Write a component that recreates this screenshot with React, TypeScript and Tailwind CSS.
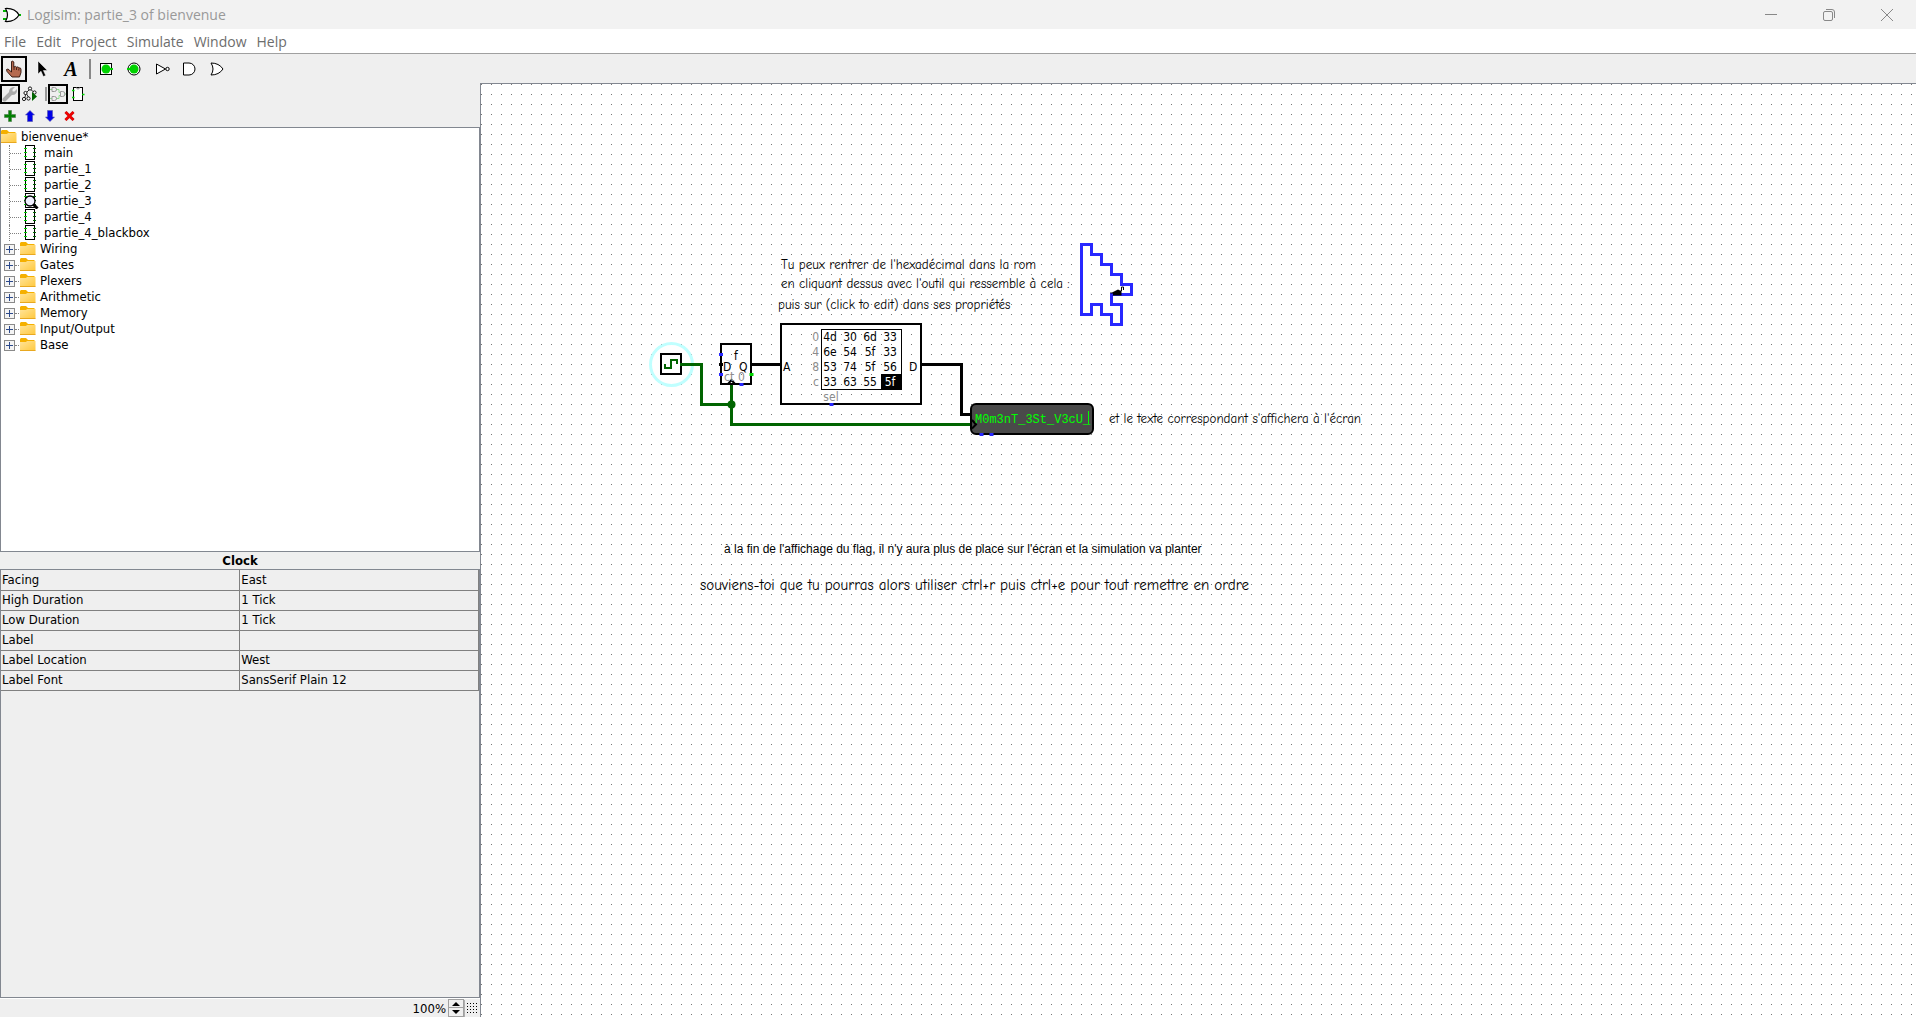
import React from "react";

const UI = "font-['DejaVu_Sans_Condensed','DejaVu_Sans',sans-serif]";

const menus = ["File", "Edit", "Project", "Simulate", "Window", "Help"];
const circuits = ["main", "partie_1", "partie_2", "partie_3", "partie_4", "partie_4_blackbox"];
const libraries = ["Wiring", "Gates", "Plexers", "Arithmetic", "Memory", "Input/Output", "Base"];
const attributes: [string, string][] = [
  ["Facing", "East"],
  ["High Duration", "1 Tick"],
  ["Low Duration", "1 Tick"],
  ["Label", ""],
  ["Label Location", "West"],
  ["Label Font", "SansSerif Plain 12"],
];
const rom: [string, string[]][] = [
  ["0", ["4d", "30", "6d", "33"]],
  ["4", ["6e", "54", "5f", "33"]],
  ["8", ["53", "74", "5f", "56"]],
  ["c", ["33", "63", "55", "5f"]],
];

function Folder() {
  return (
    <svg width="16" height="16" viewBox="0 0 16 16" className="shrink-0">
      <defs>
        <linearGradient id="folder" x1="0" y1="0" x2="1" y2="1">
          <stop offset="0" stopColor="#ffe49a" />
          <stop offset="1" stopColor="#ffc83c" />
        </linearGradient>
      </defs>
      <path d="M0 3V2l1-1h5l2 2h6l1 1v3H0z" fill="#f5b000" />
      <path d="M0 5h6l1-1h8.5v9l-.5 1H0z" fill="url(#folder)" />
      <path d="M0 13.5h15.5" stroke="#e8a820" />
    </svg>
  );
}

function CircuitIcon({ viewed }: { viewed?: boolean }) {
  return (
    <svg width="16" height="16" viewBox="0 0 16 16" className="shrink-0" shapeRendering="crispEdges">
      <rect x="2.5" y="0.5" width="9" height="14" fill="#fff" stroke="#000" />
      <path d="M1 3.5h3M1 7.5h3M1 11.5h3" stroke="#00d200" />
      <path d="M10 3.5h3M10 7.5h3M10 11.5h3" stroke="#006400" />
      {viewed && (
        <g shapeRendering="auto">
          <path d="M10.5 11.5L14.5 15.5" stroke="#000" strokeWidth="3" />
          <circle cx="7" cy="8" r="5" fill="#f0f0ff" stroke="#000" strokeWidth="1.3" />
        </g>
      )}
    </svg>
  );
}

function Expander() {
  return (
    <svg width="11" height="11" viewBox="0 0 11 11" shapeRendering="crispEdges" className="block">
      <rect x="0.5" y="0.5" width="10" height="10" fill="#f4f4f4" stroke="#8a8a8a" />
      <path d="M2 5.5h7M5.5 2v7" stroke="#2c4a8c" />
    </svg>
  );
}

function Tool({ label, active, size = "lg", children }: { label: string; active?: boolean; size?: "lg" | "sm"; children: React.ReactNode }) {
  const box = size === "lg" ? "h-[26px] w-[26px] mx-px" : "h-5 w-5";
  return (
    <button aria-label={label} className={`${box} flex items-center justify-center border-2 ${active ? "border-black" : "border-transparent"}`}>
      {children}
    </button>
  );
}

function MainToolbar() {
  return (
    <div className="flex h-[29px] shrink-0 items-center">
      <Tool label="Poke tool" active>
        <svg width="18" height="18" viewBox="0 0 18 18">
          <path d="M6.5 1.5q1.500-1 2.300.5v5l1.700-.6 1 .8 1.600-.3.9 1 1.500.2.5 1.400v3l-1.500 4.500h-7.500L2 11.500 1.500 9.500l1.500-.5 3.500 3z" fill="#b56a50" stroke="#2b1009" strokeWidth="0.9" />
          <path d="M9 7v3M11.500 7.500v2.500M13.800 8.500v2" stroke="#2b1009" strokeWidth="0.8" />
        </svg>
      </Tool>
      <Tool label="Edit tool">
        <svg width="16" height="18" viewBox="0 0 16 18">
          <path d="M4 1v13l3-2.800L9.300 16.500l2.400-1L9.400 10.500h4z" fill="#000" stroke="#fff" strokeWidth="0.5" />
        </svg>
      </Tool>
      <Tool label="Text tool">
        <span className="pl-0.5 font-['Liberation_Serif',serif] text-xl font-bold italic leading-5">A</span>
      </Tool>
      <div className="ml-[5px] mr-px h-5 w-0.5 bg-[#888]" />
      <Tool label="Input pin">
        <svg width="16" height="16" viewBox="0 0 16 16">
          <rect x="2.500" y="2.500" width="11" height="11" fill="#fff" stroke="#000" />
          <circle cx="8" cy="8" r="4.500" fill="#00d200" />
          <path d="M12 8h3" stroke="#00d200" strokeWidth="2" />
        </svg>
      </Tool>
      <Tool label="Output pin">
        <svg width="16" height="16" viewBox="0 0 16 16">
          <circle cx="8" cy="8" r="6" fill="#fff" stroke="#000" />
          <circle cx="8" cy="8" r="4.500" fill="#00d200" />
          <path d="M1 8h3" stroke="#00d200" strokeWidth="2" />
        </svg>
      </Tool>
      <Tool label="NOT gate">
        <svg width="16" height="16" viewBox="0 0 16 16" fill="#fff" stroke="#000">
          <path d="M2.500 3v10L11.500 8z" />
          <circle cx="13.500" cy="8" r="1.700" />
        </svg>
      </Tool>
      <Tool label="AND gate">
        <svg width="16" height="16" viewBox="0 0 16 16" fill="#fff" stroke="#000">
          <path d="M1.500 2H7a6 6 0 0 1 0 12H1.500z" />
        </svg>
      </Tool>
      <Tool label="OR gate">
        <svg width="16" height="16" viewBox="0 0 16 16" fill="#fff" stroke="#000">
          <path d="M1 2q8 0 12 6Q9 14 1 14q4-6 0-12z" />
        </svg>
      </Tool>
    </div>
  );
}

function ExplorerToolbars() {
  return (
    <div className="shrink-0 pt-px">
      <div className="flex h-5 items-center">
        <Tool label="Show toolbox" size="sm" active>
          <svg width="16" height="16" viewBox="0 0 16 16">
            <path d="M2.500 13.500L9 7" stroke="#aaa" strokeWidth="4" strokeLinecap="round" />
            <path d="M7 6q0-5 6-5l-2.500 2.500v2h2L15 3q.5 6-5 6z" fill="#aaa" />
          </svg>
        </Tool>
        <Tool label="Show simulation tree" size="sm">
          <svg width="16" height="16" viewBox="0 0 16 16" className="shrink-0">
            <path d="M8 3L4 7l-1.500 6M8 3l5 4M4 7l3 5" stroke="#000" fill="none" strokeWidth="0.800" />
            <g fill="#fff" stroke="#000" strokeWidth="0.900">
              <circle cx="8" cy="2.500" r="1.600" />
              <circle cx="3.500" cy="7" r="1.600" />
              <circle cx="2" cy="13" r="1.600" />
              <circle cx="6.500" cy="12.500" r="1.600" />
              <circle cx="12.500" cy="6.500" r="1.600" />
            </g>
            <path d="M10 6v9l5-4.500z" fill="#006400" />
          </svg>
        </Tool>
        <div className="ml-[5px] mr-px h-3.5 w-0.5 bg-[#999]" />
        <Tool label="Edit circuit layout" size="sm" active>
          <svg width="16" height="16" viewBox="0 0 16 16" fill="none">
            <path d="M6 3.500h3v3h2M6 12.500h3v-3h2M0 3.500h2M0 12.500h2M14 8h2" stroke="#8fdc8f" />
            <g stroke="#999">
              <path d="M2 1.500h2.500a2 2 0 0 1 0 4H2zM2 10.500h2.500a2 2 0 0 1 0 4H2zM10.500 5.500h2a2.500 2.500 0 0 1 0 5h-2z" />
            </g>
          </svg>
        </Tool>
        <Tool label="Edit circuit appearance" size="sm">
          <svg width="16" height="16" viewBox="0 0 16 16" className="shrink-0">
            <rect x="3.500" y="1.500" width="9" height="13" fill="#fff" stroke="#000" />
            <path d="M6.500 1.500a1.500 1.500 0 0 0 3 0" stroke="#888" fill="none" />
            <path d="M2 4.500h2.500M2 11.500h2.500M12 8.500h2.500" stroke="#00d200" strokeWidth="1.500" />
          </svg>
        </Tool>
      </div>
      <div className="flex h-[23px] items-center pt-px">
        <Tool label="Add circuit" size="sm">
          <svg width="12" height="12" viewBox="0 0 12 12">
            <path d="M4.500 .5h3v4h4v3h-4v4h-3v-4h-4v-3h4z" fill="#008000" stroke="#4a7a4a" strokeWidth="0.600" />
          </svg>
        </Tool>
        <Tool label="Move circuit up" size="sm">
          <svg width="12" height="12" viewBox="0 0 12 12">
            <path d="M6 .5L10.500 5H8.500v6.500h-5V5h-2z" fill="#0000e8" stroke="#5555aa" strokeWidth="0.600" />
          </svg>
        </Tool>
        <Tool label="Move circuit down" size="sm">
          <svg width="12" height="12" viewBox="0 0 12 12">
            <path d="M6 11.500L10.500 7H8.500V.5h-5V7h-2z" fill="#0000e8" stroke="#5555aa" strokeWidth="0.600" />
          </svg>
        </Tool>
        <Tool label="Remove circuit" size="sm">
          <svg width="12" height="12" viewBox="0 0 12 12">
            <path d="M1.500 2l8 8M9.500 2L1.500 10" stroke="#c02020" strokeWidth="3" />
            <path d="M1.500 2l8 8M9.500 2L1.500 10" stroke="#f00000" strokeWidth="2" />
          </svg>
        </Tool>
      </div>
    </div>
  );
}

function Tree() {
  return (
    <div className="min-h-0 flex-[423_1_0%] overflow-hidden border border-[#828790] bg-white pt-px text-[13px] leading-4">
      <div className="flex items-center gap-1">
        <Folder />
        <span>bienvenue*</span>
      </div>
      <ul>
        {circuits.map((name) => (
          <li key={name} className="flex h-4 items-center pl-2">
            <span className="h-4 w-3 border-l border-dotted border-[#808080] pt-2">
              <span className="block border-t border-dotted border-[#808080]" />
            </span>
            <span className="w-0.5" />
            <CircuitIcon viewed={name === "partie_3"} />
            <span className="ml-[5px]">{name}</span>
          </li>
        ))}
        {libraries.map((name) => (
          <li key={name} className="flex h-4 items-center pl-[3px]">
            <button aria-label={`Expand ${name}`}>
              <Expander />
            </button>
            <span className="mr-px w-1 border-t border-dotted border-[#808080]" />
            <Folder />
            <span className="ml-1">{name}</span>
          </li>
        ))}
      </ul>
    </div>
  );
}

function Attributes() {
  return (
    <div className="flex min-h-0 flex-[447_1_0%] flex-col">
      <h2 className="h-[17px] text-center text-[13px] font-bold leading-[17px]">Clock</h2>
      <div className="min-h-0 grow border border-[#828790]">
        <table className="w-full table-fixed border-collapse text-[13px] leading-[18px]">
          <tbody>
            {attributes.map(([name, value]) => (
              <tr key={name} className="h-5 border-b border-[#808080]">
                <th scope="row" className="border-r border-[#808080] p-0 pl-px text-left font-normal">
                  {name}
                </th>
                <td className="border-r border-[#808080] p-0 pl-px">{value}</td>
              </tr>
            ))}
          </tbody>
        </table>
      </div>
    </div>
  );
}

function ZoomBar() {
  return (
    <div className="flex h-[19px] shrink-0 items-end justify-end border-t border-t-white">
      <input aria-label="Zoom" defaultValue="100%" className="mr-0.5 h-4 w-10 bg-transparent text-right text-[13px] leading-4 outline-none" />
      <div className="flex h-[18px] w-4 flex-col border border-[#a0a0a0]">
        <button aria-label="Zoom in" className="flex h-1/2 items-center justify-center border-b border-[#a0a0a0] bg-[#f0f0f0]">
          <svg width="8" height="4" viewBox="0 0 8 4"><path d="M0 4l4-4 4 4z" /></svg>
        </button>
        <button aria-label="Zoom out" className="flex h-1/2 items-center justify-center bg-[#f0f0f0]">
          <svg width="8" height="4" viewBox="0 0 8 4"><path d="M0 0l4 4 4-4z" /></svg>
        </button>
      </div>
      <button aria-label="Show grid" className="flex h-[17px] w-4 items-center justify-center border-l border-[#b0b0b0]">
        <svg width="11" height="11" viewBox="0 0 11 11" shapeRendering="crispEdges">
          <path d="M0 .5h11M0 3.500h11M0 6.500h11M0 9.500h11" stroke="#000" strokeDasharray="1 2" />
        </svg>
      </button>
    </div>
  );
}

function Circuit() {
  return (
    <svg width="720" height="260" viewBox="640 240 720 260" className="absolute left-[159px] top-[156px]">
      {/* tool outline */}
      <path
        d="M1081.500 244.500h10v10h10v10h10v10h10v10h10v10h-20v10h10v20h-10v-10h-10v-10h-10v10h-10z"
        fill="none" stroke="#2828ff" strokeWidth="3"
      />
      <path d="M1110 292.500h2l4-2 2-1 2 1h1.500v5h-9l-2-2z" fill="#000" />
      <path d="M1110 294.500h3" stroke="#2828ff" strokeWidth="2" />
      <path d="M1121.500 291v-4h2v3" fill="none" stroke="#000" />

      {/* clock */}
      <circle cx="671.500" cy="364.500" r="21" fill="none" stroke="#c0ffff" strokeWidth="3" />
      <g fill="none" stroke="#006400" strokeWidth="3">
        <path d="M681 364.500h20.500v40h30M731.500 384v40.500h239.500" />
      </g>
      <rect x="661" y="354" width="20" height="20" fill="#fff" stroke="#000" strokeWidth="2" />
      <path d="M680 364.500h4" stroke="#006400" strokeWidth="3" />
      <path d="M665 364v4h6v-8h6v4" fill="none" stroke="#006400" strokeWidth="2" />
      <circle cx="731.500" cy="404.500" r="4" fill="#006400" />

      {/* register */}
      <rect x="721" y="344" width="30" height="40" fill="none" stroke="#000" strokeWidth="2" />
      <path d="M728 384l3.500-4 3.500 4" fill="none" stroke="#000" strokeWidth="2" />
      <path d="M719 364.500h4M751 364.500h31M921 364.500h40.500v50h10" fill="none" stroke="#000" strokeWidth="3" />

      {/* rom */}
      <rect x="781" y="324" width="140" height="80" fill="none" stroke="#000" strokeWidth="2" />
      <rect x="821.500" y="329.500" width="80" height="60" fill="none" stroke="#000" />
      <rect x="881" y="374" width="21" height="16" />

      {/* terminal */}
      <rect x="971" y="404" width="122" height="30" rx="5" fill="#4a4a4a" stroke="#000" strokeWidth="2" />
      <path d="M972 420l4 4.500-4 4" fill="none" stroke="#000" strokeWidth="2" />
      <path d="M1088.500 411v13" stroke="#00ff00" />

      {/* ports */}
      <path d="M719 354.500h4M719 374.500h4M739.500 384.500h4M829.500 404.500h4M979.500 434.500h4M989.500 434.500h4" stroke="#2828ff" strokeWidth="3" />
      <path d="M749.500 374.500h4" stroke="#00d200" strokeWidth="3" />

      <g className="text-[12px]" fill="#000">
        <text x="734" y="360">f</text>
        <text x="723" y="371">D</text>
        <text x="739" y="371">Q</text>
        <text x="724" y="381" fill="#8c8c8c">ct</text>
        <text x="738" y="381" fill="#8c8c8c">0</text>
        <text x="783" y="371">A</text>
        <text x="909" y="371">D</text>
        <text x="831" y="401" textAnchor="middle" fill="#8c8c8c">sel</text>
        {rom.map(([address, cells], row) => (
          <g key={address}>
            <text x="819" y={341 + row * 15} textAnchor="end" fill="#8c8c8c">{address}</text>
            {cells.map((cell, col) => (
              <text key={col} x={830 + col * 20} y={341 + row * 15} textAnchor="middle" fill={row === 3 && col === 3 ? "#fff" : "#000"}>
                {cell}
              </text>
            ))}
          </g>
        ))}
      </g>
      <text x="975" y="423" fill="#00ff00" className="font-['Liberation_Mono',monospace] text-[12px]">M0m3nT_3St_V3cU_</text>
    </svg>
  );
}

function Canvas() {
  return (
    <main className="relative min-w-0 grow overflow-hidden border-l border-t border-[#828790] bg-white font-['Comic_Sans_MS','Comic_Neue','Open_Sans',sans-serif] text-[13px] leading-4 whitespace-nowrap">
      <svg className="absolute inset-0 h-full w-full" shapeRendering="crispEdges" aria-hidden="true">
        <defs>
          <pattern id="grid" width="10" height="10" patternUnits="userSpaceOnUse">
            <rect x="0" y="0" width="1" height="1" fill="#777" />
          </pattern>
        </defs>
        <rect width="100%" height="100%" fill="url(#grid)" />
      </svg>
      <div className={UI}>
        <Circuit />
      </div>
      <p className="absolute left-[300px] top-[173px]">Tu peux rentrer de l'hexadécimal dans la rom</p>
      <p className="absolute left-[300px] top-[192px]">en cliquant dessus avec l'outil qui ressemble à cela :</p>
      <p className="absolute left-[297px] top-[213px]">puis sur (click to edit) dans ses propriétés</p>
      <p className="absolute left-[628px] top-[327px]">et le texte correspondant s'affichera à l'écran</p>
      <p className="absolute left-[243px] top-[457px] font-['Liberation_Sans',sans-serif] text-[12px]">
        à la fin de l'affichage du flag, il n'y aura plus de place sur l'écran et la simulation va planter
      </p>
      <p className="absolute left-[219px] top-[493px] text-[15px]">
        souviens-toi que tu pourras alors utiliser ctrl+r puis ctrl+e pour tout remettre en ordre
      </p>
    </main>
  );
}

export default function App() {
  return (
    <div className={`flex h-screen flex-col overflow-hidden bg-[#efefef] text-black ${UI}`}>
      <header className="flex h-[29px] shrink-0 items-center bg-[#f2f2f2] font-['Open_Sans',sans-serif] text-[#999]">
        <svg width="20" height="16" viewBox="0 0 20 16" className="ml-0.5">
          <path d="M1 4h4M1 12h4M16 8h3" stroke="#00b400" strokeWidth="2" />
          <path d="M3.500 1.500Q13 1 17 8q-4 7-13.500 6.500 4-6.500 0-13z" fill="#fff" stroke="#000" strokeWidth="1.200" />
        </svg>
        <h1 className="ml-[5px] text-[14px] leading-5">Logisim: partie_3 of bienvenue</h1>
        <div className="ml-auto flex items-center text-[#888]">
          <button aria-label="Minimize" className="flex h-7 w-[58px] items-center justify-center">
            <svg width="12" height="12" viewBox="0 0 12 12"><path d="M0 5.500h12" stroke="currentColor" /></svg>
          </button>
          <button aria-label="Restore" className="flex h-7 w-[58px] items-center justify-center">
            <svg width="12" height="12" viewBox="0 0 12 12" fill="none" stroke="currentColor">
              <rect x="0.500" y="2.500" width="9" height="9" rx="1.500" />
              <path d="M3 .5h6a2.500 2.500 0 0 1 2.500 2.500v6" />
            </svg>
          </button>
          <button aria-label="Close" className="flex h-7 w-[58px] items-center justify-center">
            <svg width="12" height="12" viewBox="0 0 12 12"><path d="M0 0l12 12M12 0L0 12" stroke="currentColor" /></svg>
          </button>
        </div>
      </header>
      <nav className="flex h-[25px] shrink-0 items-center gap-2.5 border-b border-[#a0a0a0] bg-white pl-1 pt-0.5 font-['Open_Sans',sans-serif] text-[14px] leading-5 text-[#6d6d6d]">
        {menus.map((m) => (
          <button key={m}>{m}</button>
        ))}
      </nav>
      <MainToolbar />
      <div className="flex min-h-0 grow">
        <aside className="flex w-[calc(25%+1px)] shrink-0 flex-col">
          <ExplorerToolbars />
          <Tree />
          <Attributes />
          <ZoomBar />
        </aside>
        <Canvas />
      </div>
    </div>
  );
}
